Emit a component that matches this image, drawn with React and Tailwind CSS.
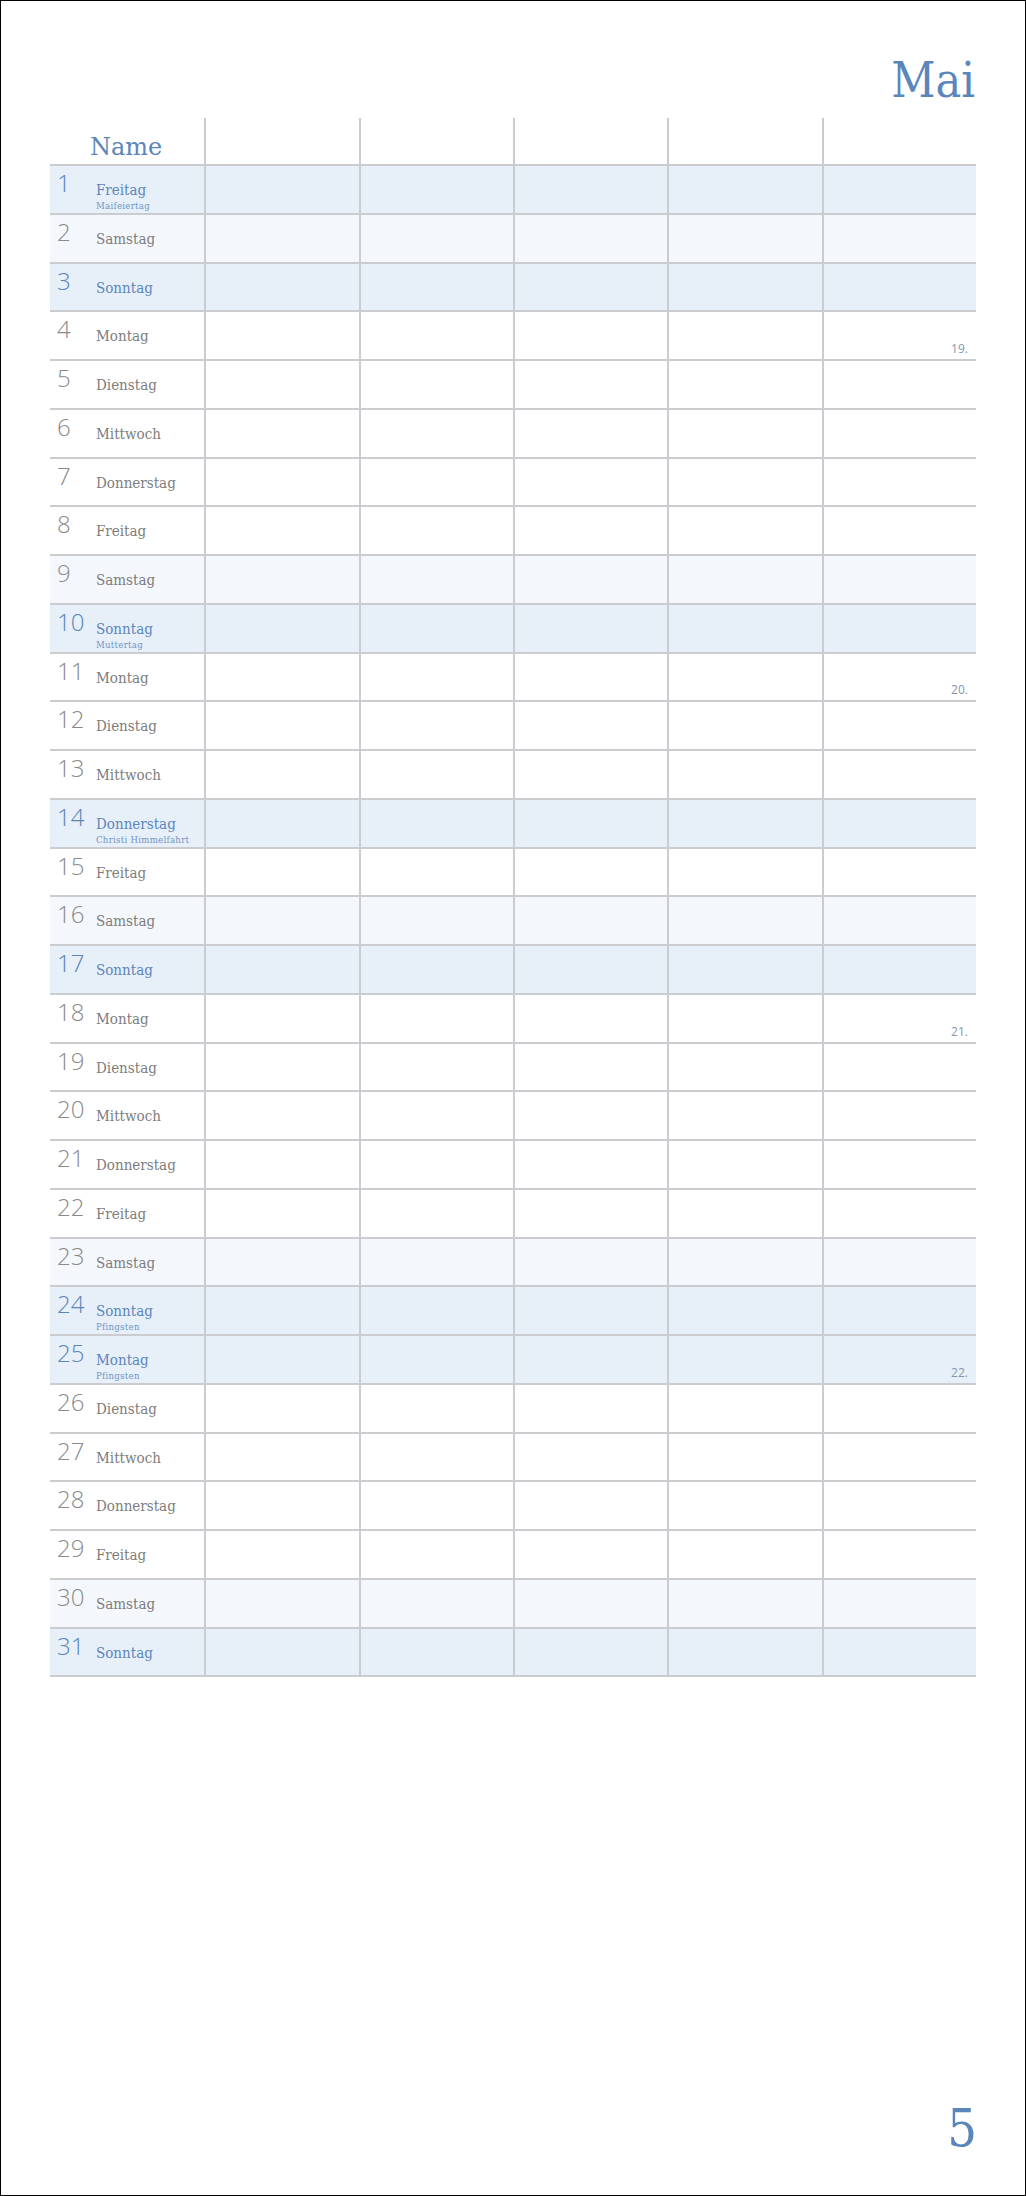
const days = [
  { d: 1, name: "Freitag", note: "Maifeiertag", type: "hol" },
  { d: 2, name: "Samstag", type: "sat" },
  { d: 3, name: "Sonntag", type: "hol" },
  { d: 4, name: "Montag", week: "19." },
  { d: 5, name: "Dienstag" },
  { d: 6, name: "Mittwoch" },
  { d: 7, name: "Donnerstag" },
  { d: 8, name: "Freitag" },
  { d: 9, name: "Samstag", type: "sat" },
  { d: 10, name: "Sonntag", note: "Muttertag", type: "hol" },
  { d: 11, name: "Montag", week: "20." },
  { d: 12, name: "Dienstag" },
  { d: 13, name: "Mittwoch" },
  { d: 14, name: "Donnerstag", note: "Christi Himmelfahrt", type: "hol" },
  { d: 15, name: "Freitag" },
  { d: 16, name: "Samstag", type: "sat" },
  { d: 17, name: "Sonntag", type: "hol" },
  { d: 18, name: "Montag", week: "21." },
  { d: 19, name: "Dienstag" },
  { d: 20, name: "Mittwoch" },
  { d: 21, name: "Donnerstag" },
  { d: 22, name: "Freitag" },
  { d: 23, name: "Samstag", type: "sat" },
  { d: 24, name: "Sonntag", note: "Pfingsten", type: "hol" },
  { d: 25, name: "Montag", note: "Pfingsten", type: "hol", week: "22." },
  { d: 26, name: "Dienstag" },
  { d: 27, name: "Mittwoch" },
  { d: 28, name: "Donnerstag" },
  { d: 29, name: "Freitag" },
  { d: 30, name: "Samstag", type: "sat" },
  { d: 31, name: "Sonntag", type: "hol" },
]

const serif = "font-['DejaVu_Serif',serif]"
const serifCond = "font-['DejaVu_Serif_Condensed','DejaVu_Serif',serif]"
const sans = "font-['Open_Sans',sans-serif]"

function DayRow({ day }) {
  const hol = day.type === "hol"
  const bg = hol ? "bg-[#e7eff9]" : day.type === "sat" ? "bg-[#f4f8fc]" : "bg-white"

  return (
    <div className={`grid grid-cols-6 h-[48.75px] border-b-2 border-[#cbcccf] ${bg}`}>

      <div className="flex pl-[7px]">
        <span className={`w-[39px] pt-[5px] text-[24px] leading-[24px] font-light ${sans} ${hol ? "text-[#5b86bb]" : "text-[#8a8a8a]"}`}>
          {day.d}
        </span>
        <div className="flex flex-col pt-[17px]">
          <span className={`text-[15px] leading-[15px] ${serifCond} ${hol ? "text-[#5b86bb]" : "text-[#7d7d7d]"}`}>
            {day.name}
          </span>
          {day.note && (
            <span className={`mt-[3px] text-[9.5px] leading-[10px] tracking-[0.3px] text-[#6f95c4] ${serifCond}`}>
              {day.note}
            </span>
          )}
        </div>
      </div>

      <div className="border-l-2 border-[#cbcccf]" />
      <div className="border-l-2 border-[#cbcccf]" />
      <div className="border-l-2 border-[#cbcccf]" />
      <div className="border-l-2 border-[#cbcccf]" />

      <div className="border-l-2 border-[#cbcccf] flex items-end justify-end pr-[8px] pb-[3px]">
        {day.week && (
          <span className={`text-[12px] leading-[14px] text-[#8497ae] ${sans}`}>{day.week}</span>
        )}
      </div>

    </div>
  )
}

export default function App() {
  return (
    <div className="w-[1026px] h-[2196px] border border-black bg-white flex flex-col">

      <div className={`pt-[55px] pr-[50px] text-right text-[48px] leading-[48px] text-[#5b86bb] ${serifCond}`}>
        Mai
      </div>

      {/* Table */}
      <div className="mt-[14px] ml-[49px] w-[926px]">

        <div className="grid grid-cols-6 h-[48px] border-b-2 border-[#cbcccf]">
          <div className={`pl-[40px] pt-[17px] text-[24px] leading-[24px] text-[#5b86bb] ${serif}`}>
            Name
          </div>
          <div className="border-l-2 border-[#cbcccf]" />
          <div className="border-l-2 border-[#cbcccf]" />
          <div className="border-l-2 border-[#cbcccf]" />
          <div className="border-l-2 border-[#cbcccf]" />
          <div className="border-l-2 border-[#cbcccf]" />
        </div>

        {days.map(day => (
          <DayRow key={day.d} day={day} />
        ))}

      </div>

      <div className="flex-1" />

      <div className={`pr-[48px] pb-[41px] text-right text-[52px] leading-[52px] text-[#5b86bb] ${serifCond}`}>
        5
      </div>

    </div>
  )
}
